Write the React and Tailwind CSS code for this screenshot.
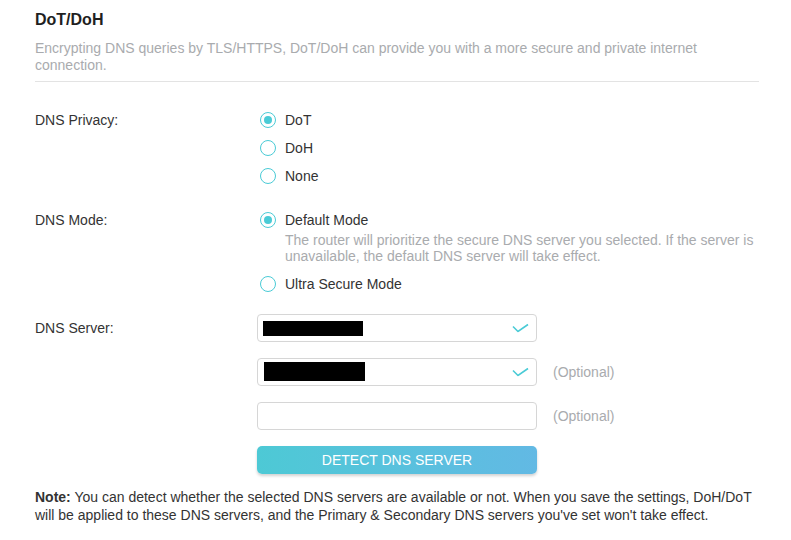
import React, { useState } from "react";

function Radio({ checked, label, onClick }) {
  return (
    <button onClick={onClick} className="flex h-7 items-center gap-[9px] text-left">
      <span className="flex h-4 w-4 items-center justify-center rounded-full border-[1.5px] border-[#4acbd6] bg-white">
        {checked && <span className="h-2 w-2 rounded-full bg-[#4acbd6]" />}
      </span>
      <span className="text-[14px] text-[#333]">{label}</span>
    </button>
  );
}

function Check() {
  return (
    <svg width="17" height="9" viewBox="0 0 17 9" className="absolute right-[7px] top-1/2 -translate-y-1/2">
      <polyline points="1,3 6,8 16,1" fill="none" stroke="#4acbd6" strokeWidth="1.6" />
    </svg>
  );
}

export default function App() {
  const [privacy, setPrivacy] = useState("DoT");
  const [mode, setMode] = useState("default");

  return (
    <div className="min-h-[540px] bg-white px-[35px] pt-[8px] font-['Liberation_Sans',Arial,sans-serif] text-[#333]">
      <div className="w-[724px]">
        <h2 className="text-[16px] font-bold leading-6 text-[#1f1f1f]">DoT/DoH</h2>
        <p className="mt-[8px] text-[14px] leading-[17px] text-[#a9abae]">
          Encrypting DNS queries by TLS/HTTPS, DoT/DoH can provide you with a more secure and private internet connection.
        </p>
        <div className="mt-[7px] h-px bg-[#e3e3e3]" />

        {/* DNS Privacy */}
        <div className="mt-[24px] flex">
          <div className="w-[225px] pt-[5px] text-[14px] leading-[18px]">DNS Privacy:</div>
          <div className="flex flex-col">
            {["DoT", "DoH", "None"].map((p) => (
              <Radio key={p} label={p} checked={privacy === p} onClick={() => setPrivacy(p)} />
            ))}
          </div>
        </div>

        {/* DNS Mode */}
        <div className="mt-[16px] flex">
          <div className="w-[225px] pt-[5px] text-[14px] leading-[18px]">DNS Mode:</div>
          <div className="flex flex-1 flex-col">
            <Radio label="Default Mode" checked={mode === "default"} onClick={() => setMode("default")} />
            <p className="-mt-[2px] pl-[25px] text-[14px] leading-4 text-[#a9abae]">
              The router will prioritize the secure DNS server you selected. If the server is unavailable, the default DNS server will take effect.
            </p>
            <div className="mt-[6px]">
              <Radio label="Ultra Secure Mode" checked={mode === "ultra"} onClick={() => setMode("ultra")} />
            </div>
          </div>
        </div>

        {/* DNS Server */}
        <div className="mt-[16px] flex">
          <div className="w-[222px] pt-[5px] text-[14px] leading-[18px]">DNS Server:</div>
          <div className="flex flex-col gap-4">
            <div className="flex items-center">
              <div className="relative h-7 w-[280px] rounded-[4px] border border-[#d6d6d6] bg-white">
                <div className="ml-[5px] mt-[6px] h-[15px] w-[100px] bg-black" />
                <Check />
              </div>
            </div>
            <div className="flex items-center">
              <div className="relative h-7 w-[280px] rounded-[4px] border border-[#d6d6d6] bg-white">
                <div className="ml-[6px] mt-[3px] h-[19px] w-[101px] bg-black" />
                <Check />
              </div>
              <span className="ml-4 text-[14px] text-[#a9abae]">(Optional)</span>
            </div>
            <div className="flex items-center">
              <input className="h-7 w-[280px] rounded-[4px] border border-[#d6d6d6] bg-white px-2 text-[14px] outline-none" />
              <span className="ml-4 text-[14px] text-[#a9abae]">(Optional)</span>
            </div>
            <button className="h-7 w-[280px] rounded-[5px] bg-gradient-to-r from-[#4dc9d5] to-[#62b9e4] text-[14px] text-white shadow-[0_2px_3px_rgba(0,0,0,0.18)]">
              DETECT DNS SERVER
            </button>
          </div>
        </div>

        <p className="mt-[14px] text-[14px] leading-[18px] text-[#333]">
          <b>Note:</b> You can detect whether the selected DNS servers are available or not. When you save the settings, DoH/DoT will be applied to these DNS servers, and the Primary &amp; Secondary DNS servers you've set won't take effect.
        </p>
      </div>
    </div>
  );
}
